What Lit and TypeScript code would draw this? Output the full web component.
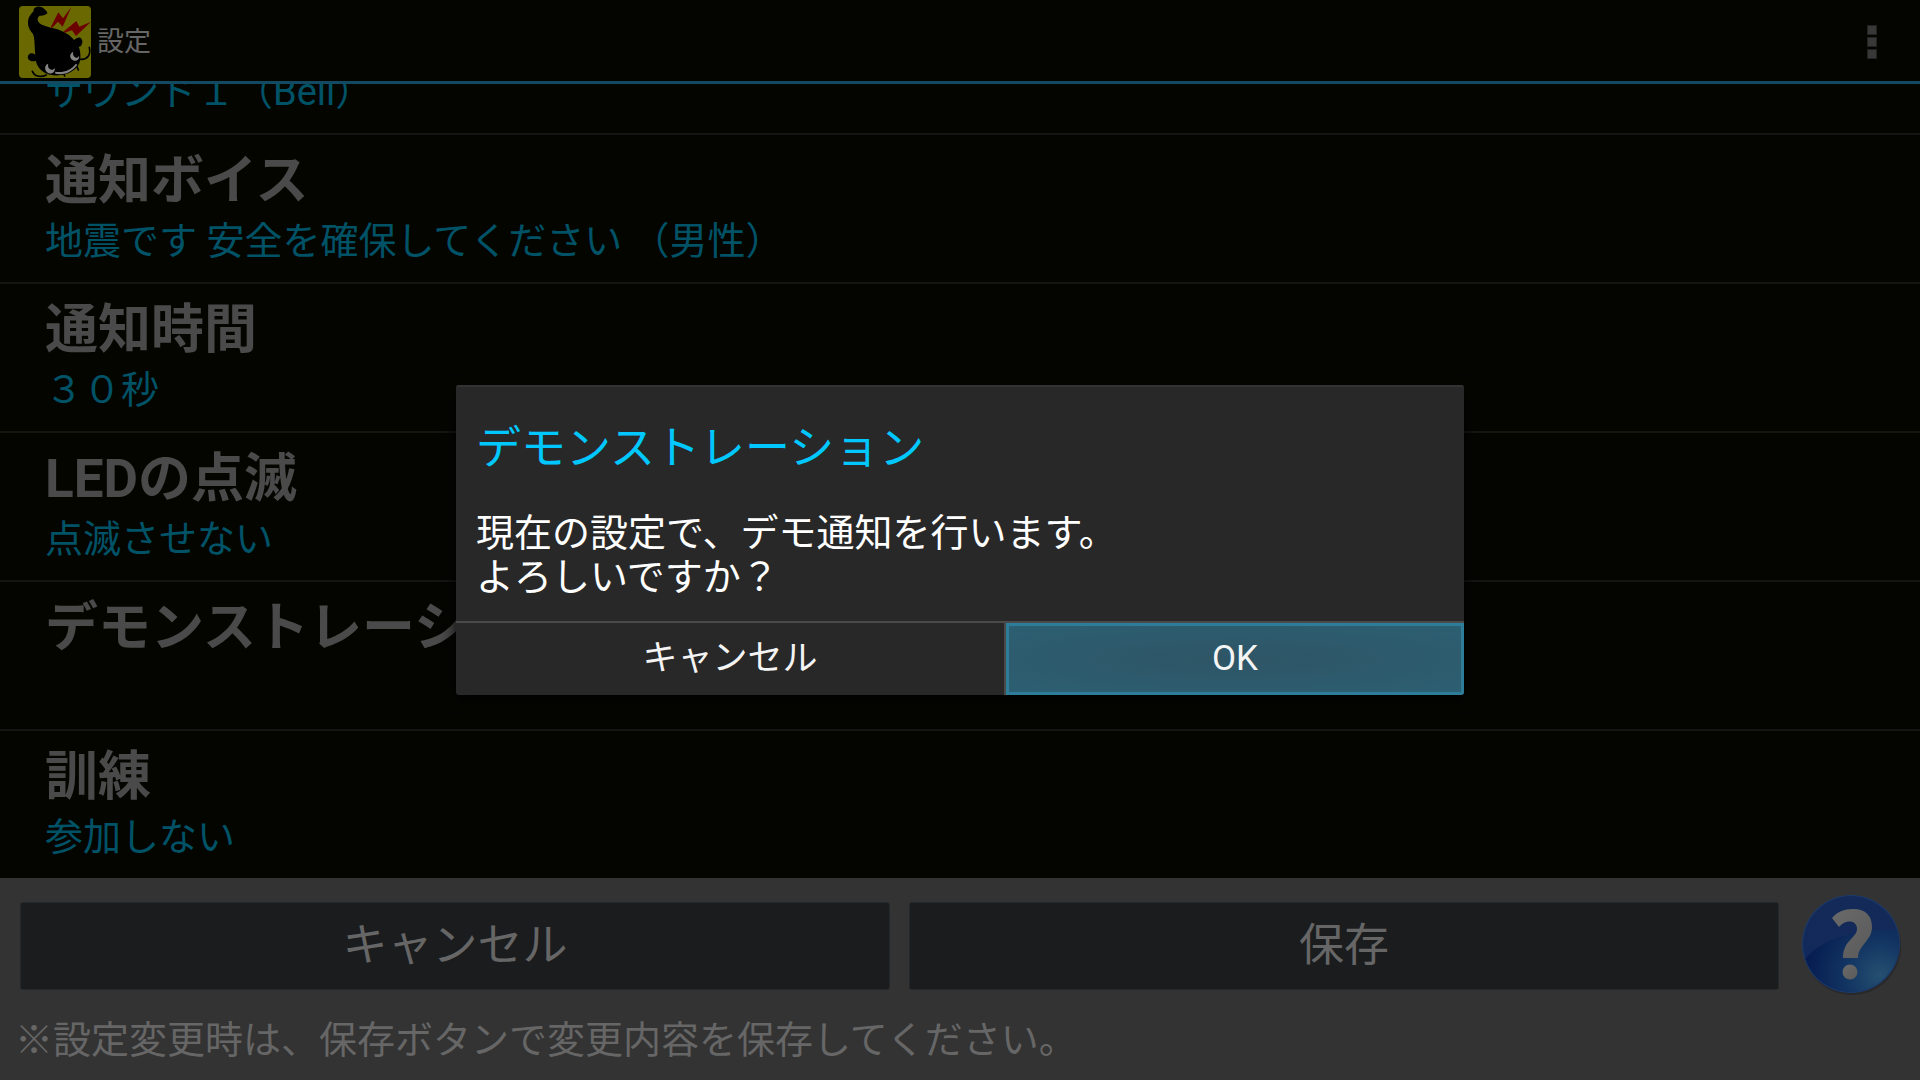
import { LitElement, html, css, svg, nothing } from "lit";
import { customElement } from "lit/decorators.js";

interface Setting {
  title?: string;
  value: string;
}

const SETTINGS: Setting[] = [
  { value: "サウンド１（Bell）" },
  { title: "通知ボイス", value: "地震です 安全を確保してください （男性）" },
  { title: "通知時間", value: "３０秒" },
  { title: "LEDの点滅", value: "点滅させない" },
  { title: "デモンストレーション", value: "" },
  { title: "訓練", value: "参加しない" },
];

const appIcon = svg`
  <svg class="logo" viewBox="0 0 216 216" aria-hidden="true">
    <defs><clipPath id="tile"><rect width="216" height="216" rx="12"/></clipPath></defs>
    <g clip-path="url(#tile)">
      <rect width="216" height="216" fill="#6a6800"/>
      <path fill="#000" d="M48 5C56-1 68 1 75 8C81 13 86 18 85 22C80 28 70 30 62 29C54 35 54 43 60 50C68 58 92 64 110 68C136 76 152 86 166 102C170 98 176 94 184 95C190 99 192 108 188 116C186 121 182 122 179 122C184 132 186 150 183 164C180 182 162 198 140 204C118 211 94 209 78 201C64 193 54 180 50 164C44 168 32 166 28 160C24 152 28 144 36 142C42 141 47 144 49 146C46 122 48 98 42 84C36 76 27 66 27 50C27 32 38 22 44 16C43 12 44 8 48 5Z"/>
      <g fill="none" stroke="#000" stroke-width="5" stroke-linecap="round">
        <path d="M40 196C46 210 62 216 82 207"/>
        <path d="M211 124C216 146 206 162 184 160"/>
        <path d="M134 200L137 210"/>
        <path d="M174 182L178 192"/>
      </g>
      <path fill="#6a0000" d="M157 3L131 62L117 47L98 67L96 62L118 19L132 37ZM216 47L171 90L159 73L136 80L135 76L172 45L181 62Z"/>
      <path fill="#858585" d="M163 137C156 140 152 147 154 154C157 165 171 168 178 160C180 157 181 153 180 149C178 155 171 157 167 153C162 149 161 142 163 137ZM88 173C80 175 77 183 79 191C83 203 98 206 105 197C107 194 108 190 107 186C104 192 97 193 92 189C87 185 86 178 88 173Z"/>
      <path fill="#858585" d="M108 197C132 201 154 194 171 173L175 176C158 200 132 208 109 203Z"/>
    </g>
  </svg>`;

const helpIcon = svg`
  <svg class="help-icon" viewBox="-2 1 104 104" aria-hidden="true">
    <defs>
      <linearGradient id="ball" x1="0" y1="0" x2="0" y2="1">
        <stop offset="0" stop-color="#142a58"/>
        <stop offset="1" stop-color="#10295c"/>
      </linearGradient>
      <radialGradient id="glow" gradientUnits="userSpaceOnUse" cx="80" cy="82" r="72">
        <stop offset="0" stop-color="#255070"/>
        <stop offset="0.45" stop-color="#133663"/>
        <stop offset="1" stop-color="#061d52"/>
      </radialGradient>
      <linearGradient id="mark" x1="0" y1="0" x2="1" y2="1">
        <stop offset="0" stop-color="#6a6a6a"/>
        <stop offset="1" stop-color="#5a5a5a"/>
      </linearGradient>
      <clipPath id="disc"><circle cx="51" cy="51" r="48"/></clipPath>
    </defs>
    <circle cx="52" cy="53" r="49" fill="#292929"/>
    <circle cx="51" cy="51" r="49" fill="#1b3a6c"/>
    <circle cx="51" cy="51" r="48" fill="url(#ball)"/>
    <path clip-path="url(#disc)" fill="url(#glow)" d="M0 72C18 46 56 34 102 37V102H0Z"/>
    <path fill="url(#mark)" d="M32 25C37 19 44 16 53 16C66 16 72 23 72 34C72 48 58 52 58 65H43C43 47 57 45 57 36C57 27 46 26 39 34Z"/>
    <circle cx="50" cy="79" r="7.500" fill="url(#mark)"/>
  </svg>`;

@customElement("app-root")
export class AppRoot extends LitElement {
  static styles = css`
    :host {
      display: grid;
      height: 100vh;
      overflow: hidden;
      background: #050500;
      color: #666;
      font-family: Roboto, "Noto Sans CJK JP", sans-serif;
    }
    * {
      box-sizing: border-box;
    }
    button {
      margin: 0;
      border: 0;
      padding: 0;
      background: none;
      color: inherit;
      font: inherit;
    }
    .screen,
    .scrim {
      grid-area: 1 / 1;
      min-width: 0;
      min-height: 0;
    }
    .screen {
      display: flex;
      flex-direction: column;
    }
    .bar {
      display: flex;
      align-items: center;
      gap: 6px;
      height: 84px;
      padding: 3px 16px 0 19px;
      border-bottom: 3px solid #134a61;
    }
    .logo {
      width: 72px;
      height: 72px;
    }
    .bar-title {
      flex: 1;
      margin: 0;
      font-size: 27px;
      line-height: 40px;
      font-weight: 400;
    }
    .more {
      display: flex;
      flex-direction: column;
      align-items: center;
      justify-content: center;
      gap: 2px;
      width: 64px;
      height: 64px;
    }
    .dot {
      width: 10px;
      height: 10px;
      border: 1px solid #222;
      background: #383838;
    }
    .list {
      flex: 1;
      min-height: 0;
      overflow: hidden;
      display: flex;
      flex-direction: column;
      justify-content: flex-end;
      margin: 0;
      padding: 0;
      list-style: none;
    }
    .item {
      flex: none;
    }
    .item + .item {
      border-top: 2px solid #151513;
    }
    .row {
      display: flex;
      flex-direction: column;
      gap: 4px;
      width: 100%;
      padding: 14px 45px 17px;
      text-align: left;
    }
    .name {
      font-size: 53px;
      line-height: 64px;
      font-weight: 700;
      color: #4a4a4a;
    }
    .value {
      min-height: 48px;
      font-size: 38px;
      line-height: 48px;
      color: #005267;
    }
    .footer {
      padding: 16px 18px 16px 15px;
      background: #333;
    }
    .actions {
      display: flex;
      align-items: center;
      gap: 19px;
      padding-left: 5px;
    }
    .action {
      flex: 1;
      height: 88px;
      border: 1px solid #25282a;
      border-radius: 3px;
      background: #1b1c1e;
      font-size: 45px;
      line-height: 60px;
    }
    .help {
      display: flex;
    }
    .help-icon {
      width: 104px;
      height: 104px;
    }
    .note {
      margin: 18px 0 0;
      font-size: 38px;
      line-height: 48px;
    }
    .scrim {
      display: grid;
      place-items: center;
    }
    .dialog {
      width: 1008px;
      max-width: 100%;
      border-radius: 3px;
      background: #282828;
      box-shadow: 0 4px 16px #000;
      color: #fff;
      overflow: hidden;
    }
    .dialog-text {
      padding: 34px 20px 22px;
      border-top: 2px solid #333;
    }
    .dialog-title {
      margin: 0 0 34px;
      font-size: 45px;
      line-height: 56px;
      font-weight: 400;
      color: #00c8ff;
    }
    .dialog-body {
      margin: 0;
      font-size: 38px;
      line-height: 44px;
    }
    .dialog-actions {
      display: grid;
      grid-template-columns: 6fr 5fr;
      border-top: 2px solid #4a4a4a;
    }
    .choice {
      height: 72px;
      font-size: 35px;
      line-height: 48px;
      color: #f4f4f4;
    }
    .cancel {
      border-right: 2px solid #4a4a4a;
    }
    .ok {
      border: 3px solid #2d7d9a;
      background: radial-gradient(ellipse at center, #2e5566, #2c5f72);
    }
  `;

  render() {
    return html`
      <div class="screen">
        <header class="bar">
          ${appIcon}
          <h1 class="bar-title">設定</h1>
          <button class="more" aria-label="メニュー">
            <span class="dot"></span><span class="dot"></span><span class="dot"></span>
          </button>
        </header>
        <ul class="list">
          ${SETTINGS.map(
            (s) => html`<li class="item">
              <button class="row">
                ${s.title ? html`<span class="name">${s.title}</span>` : nothing}
                <span class="value">${s.value}</span>
              </button>
            </li>`
          )}
        </ul>
        <footer class="footer">
          <div class="actions">
            <button class="action">キャンセル</button>
            <button class="action">保存</button>
            <button class="help" aria-label="ヘルプ">${helpIcon}</button>
          </div>
          <p class="note">※設定変更時は、保存ボタンで変更内容を保存してください。</p>
        </footer>
      </div>
      <div class="scrim">
        <section class="dialog" role="dialog" aria-modal="true" aria-labelledby="dialog-title">
          <div class="dialog-text">
            <h2 class="dialog-title" id="dialog-title">デモンストレーション</h2>
            <p class="dialog-body">現在の設定で、デモ通知を行います。<br />よろしいですか？</p>
          </div>
          <div class="dialog-actions">
            <button class="choice cancel">キャンセル</button>
            <button class="choice ok">OK</button>
          </div>
        </section>
      </div>
    `;
  }
}
